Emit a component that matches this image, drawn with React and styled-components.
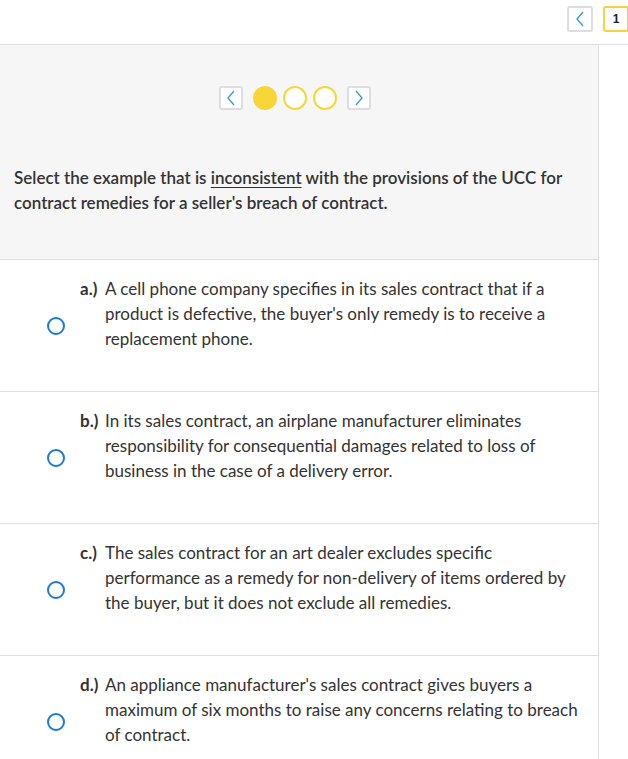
import styled, { createGlobalStyle } from "styled-components"

const Global = createGlobalStyle`
    body {
        margin: 0;
        background: #fff;
        font-family: Lato, "Liberation Sans", Arial, sans-serif;
        color: #333;
    }
`

const options = [
    { key: "a", text: "A cell phone company specifies in its sales contract that if a product is defective, the buyer's only remedy is to receive a replacement phone." },
    { key: "b", text: "In its sales contract, an airplane manufacturer eliminates responsibility for consequential damages related to loss of business in the case of a delivery error." },
    { key: "c", text: "The sales contract for an art dealer excludes specific performance as a remedy for non-delivery of items ordered by the buyer, but it does not exclude all remedies." },
    { key: "d", text: "An appliance manufacturer's sales contract gives buyers a maximum of six months to raise any concerns relating to breach of contract." },
]

const Chevron = ({ dir }) => (
    <svg width="10" height="16" viewBox="0 0 10 16">
        <path d={dir === "left" ? "M8 1 L2 8 L8 15" : "M2 1 L8 8 L2 15"} fill="none" stroke="#3598dc" strokeWidth="1.3" />
    </svg>
)

const App = () => {
    return (
        <Page>
            <Global />
            <TopBar>
                <NavButton><Chevron dir="left" /></NavButton>
                <PageNum>1</PageNum>
            </TopBar>
            <Column>
                <Prompt>
                    <Pager>
                        <SmallButton><Chevron dir="left" /></SmallButton>
                        <Dots>
                            <Dot filled />
                            <Dot />
                            <Dot />
                        </Dots>
                        <SmallButton><Chevron dir="right" /></SmallButton>
                    </Pager>
                    <Question>
                        Select the example that is <u>inconsistent</u> with the provisions of the UCC for contract remedies for a seller's breach of contract.
                    </Question>
                </Prompt>
                {options.map(o => (
                    <Option key={o.key}>
                        <Radio />
                        <Content>
                            <Label>{o.key}.)</Label>
                            <OptionText>{o.text}</OptionText>
                        </Content>
                    </Option>
                ))}
            </Column>
        </Page>
    )
}

const Page = styled.div`
    width: 628px;
    height: 759px;
    overflow: hidden;
`

const TopBar = styled.div`
    height: 45px;
    border-bottom: 1px solid #ddd;
    display: flex;
    justify-content: flex-end;
    align-items: flex-start;
    padding-top: 6px;
    box-sizing: border-box;
    gap: 10px;
    margin-right: -1px;
`

const NavButton = styled.div`
    width: 26px;
    height: 26px;
    box-sizing: border-box;
    border: 2px solid #dcdde2;
    border-radius: 3px;
    display: flex;
    align-items: center;
    justify-content: center;
    background: #fff;
`

const PageNum = styled(NavButton)`
    border-color: #f6d33c;
    font-family: "Liberation Sans", Arial, sans-serif;
    font-weight: 700;
    font-size: 12px;
    color: #222;
`

const Column = styled.div`
    width: 598px;
    border-right: 1px solid #ddd;
`

const Prompt = styled.div`
    background: #f6f6f6;
    height: 215px;
    border-bottom: 1px solid #ddd;
    padding: 41px 14px 0;
    box-sizing: border-box;
`

const Pager = styled.div`
    display: flex;
    justify-content: center;
    align-items: center;
    gap: 10px;
    margin-left: -9px;
`

const SmallButton = styled(NavButton)`
    width: 24px;
    height: 24px;
`

const Dots = styled.div`
    display: flex;
    gap: 6px;
`

const Dot = styled.div`
    width: 24px;
    height: 24px;
    border-radius: 50%;
    box-sizing: border-box;
    background: ${p => p.filled ? "#f8d63a" : "#fff"};
    border: 2px solid #f8d63a;
`

const Question = styled.p`
    margin: 55px 0 0;
    font-size: 17px;
    line-height: 25px;
    font-weight: 600;
    color: #333;

    u {
        text-decoration-thickness: 1px;
        text-underline-offset: 3px;
    }
`

const Option = styled.div`
    height: 132px;
    box-sizing: border-box;
    border-bottom: 1px solid #ddd;
    display: flex;
    align-items: center;
    padding: 0 18px 0 47px;
`

const Radio = styled.div`
    width: 18px;
    height: 18px;
    box-sizing: border-box;
    border: 2px solid #1b7ad0;
    border-radius: 50%;
    flex-shrink: 0;
    margin-right: 15px;
`

const Content = styled.div`
    align-self: flex-start;
    display: flex;
    padding-top: 16px;
`

const Label = styled.span`
    font-weight: 700;
    font-size: 17px;
    line-height: 25px;
    width: 25px;
    flex-shrink: 0;
    color: #333;
`

const OptionText = styled.p`
    margin: 0;
    font-size: 17px;
    line-height: 25px;
    color: #333;
`

export default App
